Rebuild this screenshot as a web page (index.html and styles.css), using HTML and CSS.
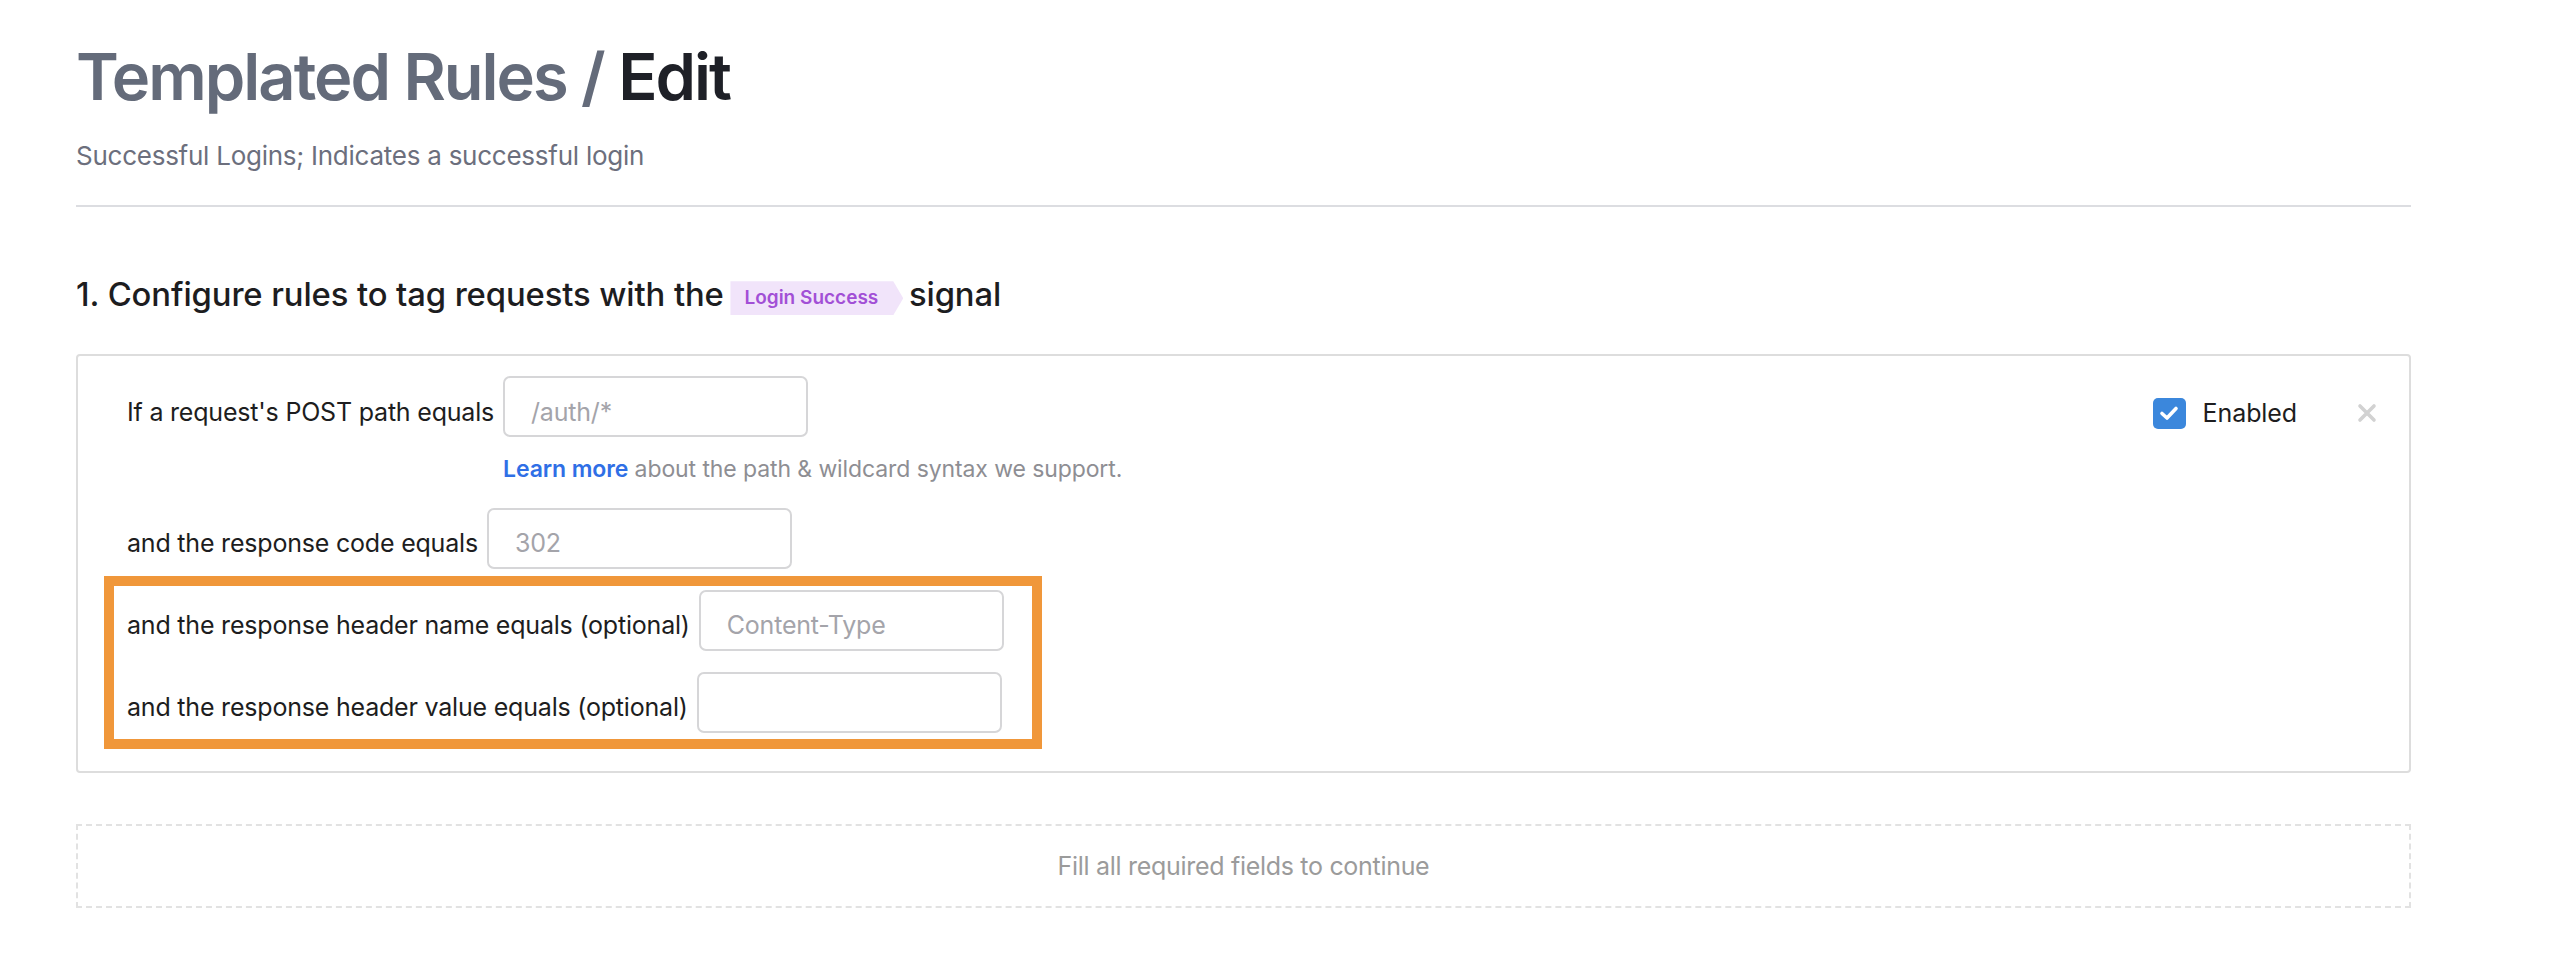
FILE: index.html
```html
<!DOCTYPE html>
<html lang="en">
<head>
<meta charset="utf-8">
<title>Templated Rules / Edit</title>
<link rel="stylesheet" href="styles.css">
</head>
<body>
<main class="page">
  <header class="page-header">
    <h1 class="title"><span class="crumb">Templated Rules /</span> <span class="current">Edit</span></h1>
    <p class="subtitle">Successful Logins; Indicates a successful login</p>
  </header>

  <section class="step">
    <h2 class="step-title">1. Configure rules to tag requests with the <span class="signal-badge">Login Success</span> signal</h2>

    <div class="rule-card">
      <div class="rule-form">
        <div class="row">
          <label class="label">If a request's POST path equals</label>
          <div class="field-col">
            <input class="input" type="text" placeholder="/auth/*">
            <p class="help"><a class="help-link" href="#">Learn more</a> about the path &amp; wildcard syntax we support.</p>
          </div>
        </div>
        <div class="row">
          <label class="label">and the response code equals</label>
          <input class="input" type="text" placeholder="302">
        </div>
        <div class="highlight">
          <div class="row">
            <label class="label">and the response header name equals (optional)</label>
            <input class="input" type="text" placeholder="Content-Type">
          </div>
          <div class="row">
            <label class="label">and the response header value equals (optional)</label>
            <input class="input" type="text">
          </div>
        </div>
      </div>
      <div class="rule-controls">
        <span class="checkbox">
          <svg width="20" height="16" viewBox="0 0 20 16"><path d="M3 8.5 L8 13 L17 3.5" fill="none" stroke="#fff" stroke-width="3.6" stroke-linecap="round" stroke-linejoin="round"/></svg>
        </span>
        <span class="enabled-label">Enabled</span>
        <span class="remove">
          <svg width="20" height="20" viewBox="0 0 20 20"><path d="M3 3 L17 17 M17 3 L3 17" stroke="#d2d2d2" stroke-width="3.6" stroke-linecap="round"/></svg>
        </span>
      </div>
    </div>

    <div class="continue-box">Fill all required fields to continue</div>
  </section>
</main>
</body>
</html>
```

FILE: styles.css
```css
* { box-sizing: border-box; }

html, body {
  margin: 0;
  padding: 0;
  background: #ffffff;
}

body {
  font-family: "Inter", "Noto Sans", "Liberation Sans", sans-serif;
  color: #1d1d20;
}

.page {
  width: 2335px;
  margin-left: 76px;
  padding-top: 38px;
}

.page-header {
  border-bottom: 2px solid #dcdde1;
  padding-bottom: 34px;
}

.title {
  margin: 0;
  font-size: 65px;
  font-weight: 600;
  line-height: 1.2;
  letter-spacing: -2px;
}

.crumb { color: #646b7a; }
.current { color: #1e2027; }

.subtitle {
  margin: 24px 0 0;
  font-size: 26px;
  line-height: 1.2;
  letter-spacing: -0.25px;
  color: #6c6f7d;
}

.step {
  padding-top: 68px;
}

.step-title {
  margin: 0;
  font-size: 32.8px;
  font-weight: 500;
  line-height: 1.2;
  color: #1d1d1f;
  letter-spacing: -0.1px;
}

.signal-badge {
  display: inline-block;
  vertical-align: 2px;
  height: 34px;
  line-height: 34px;
  padding: 0 25px 0 14px;
  margin: 0 -3px 0 -2px;
  font-size: 19px;
  font-weight: 600;
  letter-spacing: 0;
  color: #a24fd6;
  background: #f1e4fa;
  clip-path: polygon(0 0, calc(100% - 10px) 0, 100% 50%, calc(100% - 10px) 100%, 0 100%);
}

.rule-card {
  margin-top: 39px;
  border: 2px solid #dddddd;
  border-radius: 4px;
  padding: 20px 32px 22px 49px;
  display: flex;
  align-items: flex-start;
  justify-content: space-between;
}

.rule-form {
  display: flex;
  flex-direction: column;
  gap: 21px;
}

.row {
  display: flex;
  align-items: baseline;
  gap: 9px;
}

.label {
  font-size: 25px;
  letter-spacing: -0.2px;
  color: #1d1d20;
}

.field-col {
  display: flex;
  flex-direction: column;
}

.input {
  width: 305px;
  height: 61px;
  padding: 10px 20px 0 26px;
  border: 2px solid #d6d6d8;
  border-radius: 7px;
  font-family: inherit;
  font-size: 25px;
  letter-spacing: -0.2px;
  color: #1d1d20;
  background: #fff;
  outline: none;
}

.input::placeholder { color: #a4a4aa; }

.help {
  margin: 19px 0 3px;
  font-size: 23px;
  line-height: 1.2;
  letter-spacing: -0.1px;
  color: #8e8e93;
}

.help-link {
  color: #2f6fe6;
  font-weight: 600;
  text-decoration: none;
}

.highlight {
  width: fit-content;
  margin: -14px 0 0 -23px;
  padding: 4px 28px 6px 13px;
  border: 10px solid #f0973a;
  display: flex;
  flex-direction: column;
  gap: 21px;
}

.rule-controls {
  display: flex;
  align-items: center;
  height: 32px;
  margin-top: 21px;
}

.checkbox {
  width: 33px;
  height: 31px;
  border-radius: 5px;
  background: #3b87dc;
  display: flex;
  align-items: center;
  justify-content: center;
}

.enabled-label {
  margin-left: 17px;
  font-size: 25px;
  line-height: 32px;
  letter-spacing: -0.1px;
  color: #1d1d20;
}

.remove {
  margin-left: 60px;
  display: flex;
  align-items: center;
}

.continue-box {
  margin-top: 51px;
  height: 84px;
  border: 2px dashed #e2e2e2;
  display: flex;
  align-items: center;
  justify-content: center;
  font-size: 25px;
  letter-spacing: -0.3px;
  color: #9b9b9b;
}
```
